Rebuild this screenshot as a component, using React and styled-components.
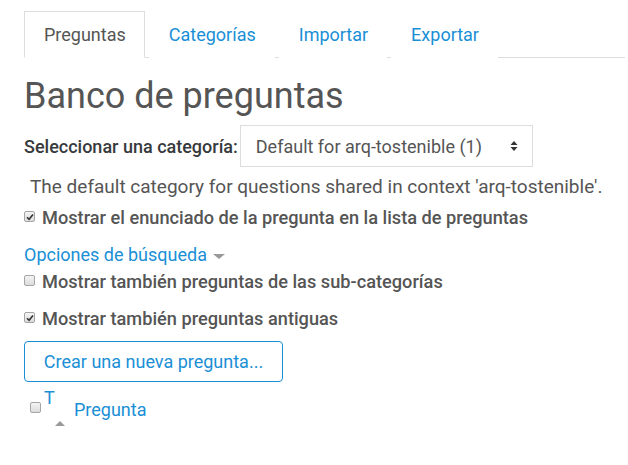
import React, { useState } from "react";
import styled, { createGlobalStyle } from "styled-components";

const GlobalStyle = createGlobalStyle`
	body {
		margin: 0;
		background: #fff;
		font-family: Roboto, "Liberation Sans", sans-serif;
		color: #555;
	}
`;

const Page = styled.div`
	padding: 11px 3px 0 24px;
	width: 628px;
	box-sizing: border-box;
`;

const Tabs = styled.ul`
	display: flex;
	list-style: none;
	margin: 0;
	padding: 0;
	border-bottom: 1px solid #ddd;
`;

const Tab = styled.li`
	margin-bottom: -1px;
	padding: 0 18px 0 19px;
	height: 47px;
	display: flex;
	align-items: center;
	box-sizing: border-box;
	font-size: 18px;
	border: 1px solid ${p => (p.$active ? "#ddd" : "transparent")};
	border-bottom-color: ${p => (p.$active ? "#fff" : "transparent")};
	background: #fff;
	color: ${p => (p.$active ? "#555" : "#1a8fd6")};
	cursor: pointer;
	& + & {
		margin-left: 4px;
	}
`;

const Heading = styled.h2`
	margin: 20px 0 11px;
	font-size: 36px;
	font-weight: 400;
	line-height: 36px;
	color: #555;
`;

const SelectRow = styled.div`
	display: flex;
	align-items: center;
	gap: 2px;
`;

const Label = styled.label`
	font-size: 18px;
	font-weight: 500;
	color: #373a3c;
`;

const Select = styled.div`
	width: 293px;
	height: 42px;
	box-sizing: border-box;
	border: 1px solid #ddd;
	display: flex;
	align-items: center;
	justify-content: space-between;
	padding: 0 14px 0 15px;
	font-size: 18px;
	color: #555;
`;

const Arrows = styled.svg`
	width: 8px;
	height: 10px;
`;

const Description = styled.p`
	margin: 10px 0 0 6px;
	font-size: 19px;
	line-height: 20px;
	color: #555;
`;

const CheckRow = styled.label`
	display: flex;
	align-items: center;
	gap: 7px;
	margin-top: ${p => p.$mt}px;
	font-size: 18.2px;
	font-weight: 500;
	color: #555;
	line-height: 20px;
`;

const Box = styled.span`
	width: 11px;
	height: 11px;
	box-sizing: border-box;
	border: 1px solid #a5a5a5;
	border-radius: 2px;
	background: linear-gradient(#f4f4f4, #dcdcdc);
	display: inline-flex;
	align-items: center;
	justify-content: center;
	flex: none;
	margin-top: -3px;
`;

const Tick = styled.svg`
	width: 8px;
	height: 8px;
`;

const Link = styled.a`
	display: inline-flex;
	align-items: center;
	gap: 6px;
	color: #1a8fd6;
	font-size: 18px;
	text-decoration: none;
	margin-top: 17px;
	line-height: 20px;
`;

const Caret = styled.span`
	width: 0;
	height: 0;
	border-left: 6px solid transparent;
	border-right: 6px solid transparent;
	border-top: 5px solid #999;
	margin-top: 3px;
`;

const Button = styled.button`
	margin-top: 12px;
	width: 259px;
	height: 41px;
	background: #fff;
	border: 1px solid #1a8fd6;
	border-radius: 4px;
	color: #1a8fd6;
	font-family: inherit;
	font-size: 18px;
	padding: 0;
	cursor: pointer;
`;

const TableHead = styled.div`
	display: flex;
	align-items: center;
	margin: 7px 0 0 6px;
	height: 40px;
`;

const SortCol = styled.div`
	position: relative;
	width: 33px;
	height: 40px;
`;

const TypeLetter = styled.span`
	position: absolute;
	left: 3px;
	top: 0;
	color: #1a8fd6;
	font-size: 18px;
	line-height: 18px;
`;

const SortArrow = styled.span`
	position: absolute;
	left: 14px;
	top: 32px;
	width: 0;
	height: 0;
	border-left: 5px solid transparent;
	border-right: 5px solid transparent;
	border-bottom: 5px solid #999;
`;

const ColLink = styled.a`
	color: #1a8fd6;
	font-size: 18px;
	text-decoration: none;
`;

const Checkbox = ({ checked }) => (
	<Box>
		{checked && (
			<Tick viewBox="0 0 8 8">
				<path d="M1 4.2 L3.1 6.3 L7 1.6" fill="none" stroke="#333" strokeWidth="1.6" />
			</Tick>
		)}
	</Box>
);

const tabs = ["Preguntas", "Categorías", "Importar", "Exportar"];

export default function App() {
	const [active] = useState(0);
	return (
		<Page>
			<GlobalStyle />
			<Tabs>
				{tabs.map((t, i) => (
					<Tab key={t} $active={i === active}>
						{t}
					</Tab>
				))}
			</Tabs>
			<Heading>Banco de preguntas</Heading>
			<SelectRow>
				<Label>Seleccionar una categoría:</Label>
				<Select>
					<span>Default for arq-tostenible (1)</span>
					<Arrows viewBox="0 0 8 10">
						<path d="M4 0 L7.5 4 H0.5 Z M4 10 L7.5 6 H0.5 Z" fill="#333" />
					</Arrows>
				</Select>
			</SelectRow>
			<Description>
				The default category for questions shared in context 'arq-tostenible'.
			</Description>
			<CheckRow $mt={11}>
				<Checkbox checked />
				Mostrar el enunciado de la pregunta en la lista de preguntas
			</CheckRow>
			<Link href="#">
				Opciones de búsqueda <Caret />
			</Link>
			<CheckRow $mt={7}>
				<Checkbox />
				Mostrar también preguntas de las sub-categorías
			</CheckRow>
			<CheckRow $mt={17}>
				<Checkbox checked />
				Mostrar también preguntas antiguas
			</CheckRow>
			<Button>Crear una nueva pregunta...</Button>
			<TableHead>
				<Checkbox />
				<SortCol>
					<TypeLetter>T</TypeLetter>
					<SortArrow />
				</SortCol>
				<ColLink href="#">Pregunta</ColLink>
			</TableHead>
		</Page>
	);
}
